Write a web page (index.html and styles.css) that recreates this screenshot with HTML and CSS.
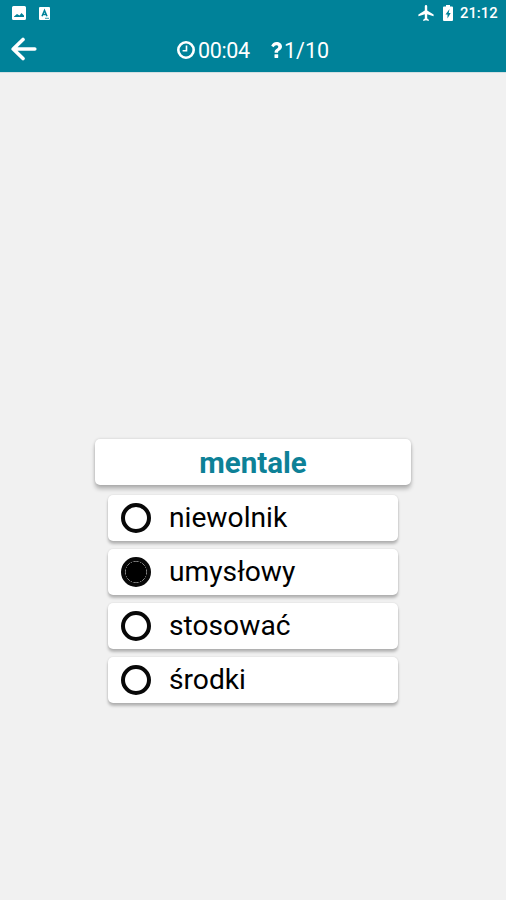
FILE: index.html
```html
<!DOCTYPE html>
<html lang="pl">
<head>
<meta charset="utf-8">
<title>Quiz</title>
<link rel="stylesheet" href="styles.css">
</head>
<body>
<header class="top">
  <div class="status">
    <svg class="notif-image" viewBox="0 0 14 14" width="14" height="14"><path fill="#fff" fill-rule="evenodd" d="M1.500 0h11A1.500 1.500 0 0 1 14 1.500v11a1.500 1.500 0 0 1-1.500 1.500h-11A1.500 1.500 0 0 1 0 12.500v-11A1.500 1.500 0 0 1 1.500 0zM2 11h10V9.500L9.500 7 7.500 9.500 5 8 2 10.500z"/></svg>
    <svg class="notif-a" viewBox="0 0 11 13" width="11" height="13"><rect width="11" height="13" rx="1" fill="#fff"/><path fill="none" stroke="#008299" stroke-width="1.500" d="M3 9.300 5.500 3.500 8 9.300M4 7.500h3"/><path stroke="#008299" stroke-width=".8" d="M6 11.300h4"/></svg>
    <span class="spacer"></span>
    <svg class="plane" viewBox="2 2 19 20" width="16" height="16"><path fill="#fff" d="M21 16v-2l-8-5V3.500a1.500 1.500 0 0 0-3 0V9l-8 5v2l8-2.500V19l-2 1.500V22l3.500-1 3.500 1v-1.500L13 19v-5.500z"/></svg>
    <svg class="battery" viewBox="0 0 10 16" width="10" height="16"><path fill="#fff" fill-rule="evenodd" d="M3 0h4v1.500h2a1 1 0 0 1 1 1V15a1 1 0 0 1-1 1H1a1 1 0 0 1-1-1V2.500a1 1 0 0 1 1-1h2zM6.500 4 2.500 9.500h2V13.500L7.700 8H5.700z"/></svg>
    <span class="clock">21:12</span>
  </div>
  <div class="bar">
    <svg class="back" viewBox="0 0 26 24" width="26" height="24"><path fill="none" stroke="#fff" stroke-width="3.600" stroke-linecap="round" stroke-linejoin="round" d="M12 2.500 2.200 12l9.800 9.500M3 12h20.800"/></svg>
    <svg class="timer-icon" viewBox="0 0 18 18" width="18" height="18"><circle cx="9" cy="9" r="7.700" fill="none" stroke="#fff" stroke-width="2.600"/><path fill="none" stroke="#fff" stroke-width="1.600" d="M9.500 4.500v5.300H5.600"/></svg>
    <span class="time">00:04</span>
    <svg class="question" viewBox="0 0 11 16" width="11" height="16"><path fill="#fff" d="M.2 3.800C1.300 1.300 3.100 0 5.600 0 8.600 0 11 2 11 4.600c0 2-1.100 3-2.600 3.900-1 .6-1.300 1-1.300 1.900v.4H3.600v-.7c0-1.700.8-2.500 2.200-3.400 1.100-.7 1.500-1.100 1.500-1.900 0-.9-.8-1.500-1.900-1.500-1.300 0-1.900.7-2.800 2z"/><rect x="3.500" y="12.200" width="3.700" height="3.700" rx=".4" fill="#fff"/></svg>
    <span class="count">1/10</span>
  </div>
</header>
<main class="quiz">
  <h1 class="word">mentale</h1>
  <ul class="answers">
    <li class="answer"><span class="radio"></span>niewolnik</li>
    <li class="answer"><span class="radio selected"></span>umysłowy</li>
    <li class="answer"><span class="radio"></span>stosować</li>
    <li class="answer"><span class="radio"></span>środki</li>
  </ul>
</main>
</body>
</html>
```
FILE: styles.css
```css
* { box-sizing: border-box; }
body {
  margin: 0;
  height: 900px;
  overflow: hidden;
  background: #f1f1f1;
  font-family: Roboto, sans-serif;
  color: #000;
}
svg { display: block; flex: none; }
.top {
  height: 72px;
  background: #008299;
  color: #fff;
  box-shadow: 0 1px 0 #d3dfe2;
}
.status {
  display: flex;
  align-items: center;
  height: 26px;
  padding: 0 8px 0 12px;
}
.notif-a { margin-left: 13px; }
.spacer { flex: 1; }
.battery { margin-left: 9px; }
.clock {
  width: 38px;
  margin-left: 7px;
  font-size: 14.800px;
  font-weight: 500;
  line-height: 26px;
  white-space: nowrap;
}
.bar {
  display: flex;
  align-items: center;
  height: 46px;
  padding-left: 11px;
}
.timer-icon { margin-left: 140px; margin-top: 2px; }
.time, .count {
  margin-top: 3px;
  font-size: 21.500px;
  line-height: 26px;
}
.time { width: 53px; margin-left: 3px; letter-spacing: -.35px; }
.question { margin-left: 20px; margin-top: 2px; }
.count { margin-left: 2px; }
.quiz {
  display: flex;
  flex-direction: column;
  align-items: center;
  padding: 367px 0 0;
}
.word {
  width: 316px;
  height: 46px;
  margin: 0 0 10px;
  border-radius: 5px;
  background: #fff;
  box-shadow: 0 4px 4px rgba(0, 0, 0, .25), 0 0 3px rgba(0, 0, 0, .15);
  color: #0d8197;
  font-size: 29.500px;
  font-weight: 700;
  line-height: 48px;
  text-align: center;
}
.answers {
  display: flex;
  flex-direction: column;
  gap: 8px;
  width: 290px;
  margin: 0;
  padding: 0;
  list-style: none;
}
.answer {
  display: flex;
  align-items: center;
  height: 46px;
  padding-left: 13px;
  border-radius: 5px;
  background: #fff;
  box-shadow: 0 3px 3px rgba(0, 0, 0, .25), 0 0 2px rgba(0, 0, 0, .12);
  font-size: 28.200px;
  line-height: 46px;
}
.radio {
  width: 30px;
  height: 30px;
  margin-right: 18px;
  border: 4px solid #080808;
  border-radius: 50%;
}
.selected {
  background: radial-gradient(circle, #000 10.300px, #999 10.600px, #080808 11.200px) border-box;
}
```
